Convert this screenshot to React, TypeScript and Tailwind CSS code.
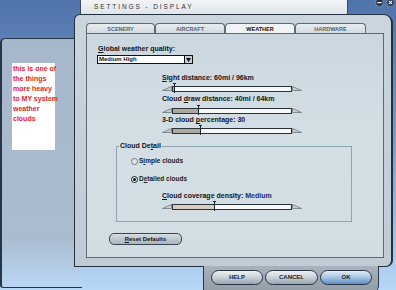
import React from "react";

const font = "font-['Liberation_Sans',Arial,sans-serif]";

function U({ children }: { children: React.ReactNode }) {
  return <span className="underline underline-offset-[1px]">{children}</span>;
}

function Slider({ value, fill = "#b3afa6" }: { value: number; fill?: string }) {
  return (
    <div className="flex h-[7px] w-[140px] items-center">
      <svg width="10" height="7" viewBox="0 0 10 7">
        <polygon points="0.5,5.5 9.5,1.5 9.5,5.5" fill="#c9d0d6" stroke="#6c767e" strokeWidth="0.8" />
      </svg>
      <div className="relative h-[6px] flex-1 border border-[#2b333a] bg-[#f6f7f7]">
        <div className="h-full" style={{ width: value, background: fill }} />
        <div className="absolute top-[-4px] h-[10px] w-[1px] bg-[#1d2329]" style={{ left: value }} />
        <div className="absolute top-[-4px] h-[1px] w-[3px] bg-[#1d2329]" style={{ left: value - 1 }} />
      </div>
      <svg width="10" height="7" viewBox="0 0 10 7">
        <polygon points="0.5,1.5 9.5,5.5 0.5,5.5" fill="#c9d0d6" stroke="#6c767e" strokeWidth="0.8" />
      </svg>
    </div>
  );
}

function Radio({ checked, children }: { checked?: boolean; children: React.ReactNode }) {
  return (
    <div className="flex h-[8px] items-center gap-[1px]">
      <div
        className={
          checked
            ? "flex h-[7px] w-[7px] items-center justify-center rounded-full border border-[#1c2228] bg-[#f2f4f4]"
            : "h-[7px] w-[7px] rounded-full border border-[#6e7a84] bg-[#dfe8ee]"
        }
      >
        {checked && <div className="h-[3px] w-[3px] rounded-full bg-[#111]" />}
      </div>
      <span className="text-[6.5px] font-bold leading-[8px] text-[#1a1e22]">{children}</span>
    </div>
  );
}

const tabs = ["SCENERY", "AIRCRAFT", "WEATHER", "HARDWARE"];
const tabW = ["w-[69px]", "w-[70px]", "w-[70px]", "w-[71px]"];

function PillButton({ label, primary, w }: { label: string; primary?: boolean; w: string }) {
  return (
    <button
      className={
        (primary
          ? "bg-linear-to-b from-[#e2ecf6] via-[#a8c4e2] to-[#5e8cc4] "
          : "bg-linear-to-b from-[#eef1f4] via-[#c9d1d8] to-[#98a4b0] ") +
        w +
        " flex h-[15px] items-center justify-center rounded-full border-[1.5px] border-[#283644] text-[6px] font-bold text-[#18222e]"
      }
    >
      {label}
    </button>
  );
}

export default function App() {
  return (
    <div className={`${font} relative h-[290px] w-[396px] overflow-hidden bg-linear-to-b from-[#4f74ab] via-[#7c9ed0] to-[#b6d7f6]`}>
      {/* left panel */}
      <div className="absolute left-0 top-[38px] flex h-[250px] w-[82px] flex-col rounded-tl-[5px] rounded-bl-[3px] border-l-2 border-t border-b border-[#28344a] bg-linear-to-b from-[#a7b7cb] via-[#aabccf] via-80% to-[#b8d6f4]">
        <div className="ml-[10px] mt-[24px] h-[87px] w-[43px] whitespace-nowrap bg-white pl-[1px] pt-[1px] text-[7px] font-bold leading-[10px] text-[#e5212b]">
          <p>this is one of</p>
          <p>the things</p>
          <p>more heavy</p>
          <p>to MY system</p>
          <p>weather</p>
          <p>clouds</p>
        </div>
      </div>

      {/* title tab */}
      <div className="absolute left-[80px] top-0 h-[16px] w-[268px] rounded-br-[4px] border-l border-r border-[#3a4858] bg-linear-to-b from-[#f2f4f6] to-[#dde3e8] pl-[13px] pt-[3px] text-[6.5px] leading-[8px] tracking-[1.9px] text-[#2e3438]">
        SETTINGS - DISPLAY
      </div>

      {/* window controls */}
      <div className="absolute right-[1px] top-[-2px] flex gap-[2px]">
        <svg width="9" height="9" viewBox="0 0 9 9">
          <circle cx="4.5" cy="4.5" r="4" fill="#1e2c48" stroke="#8ea2c0" strokeWidth="0.8" />
          <rect x="2.3" y="4" width="4.4" height="1.2" fill="#fff" />
        </svg>
        <svg width="9" height="9" viewBox="0 0 9 9">
          <circle cx="4.5" cy="4.5" r="4" fill="#1e2c48" stroke="#8ea2c0" strokeWidth="0.8" />
          <path d="M2.8 2.8 L6.2 6.2 M6.2 2.8 L2.8 6.2" stroke="#fff" strokeWidth="1.1" />
        </svg>
      </div>

      {/* dialog */}
      <div className="absolute left-[74px] top-[14px] flex h-[253px] w-[319px] flex-col rounded-tl-[6px] rounded-tr-[9px] rounded-br-[7px] border border-r-2 border-[#24303c] bg-linear-to-b from-[#cad5dd] to-[#bfcbd5]">
        <div className="ml-[11px] mt-[8px] flex h-[10px]">
          {tabs.map((t, i) => (
            <div
              key={t}
              className={
                tabW[i] +
                (t === "WEATHER"
                  ? " z-10 bg-[#f1f4f6] font-bold text-[#0e1012]"
                  : " bg-linear-to-b from-[#e8edf1] to-[#d2dbe2] font-bold text-[#58626c]") +
                " flex items-center justify-center rounded-t-[4px] border-l border-r border-t border-[#5c6a76] text-[5.5px] leading-[6px]"
              }
            >
              {t}
            </div>
          ))}
        </div>

        <div className="ml-[11px] flex h-[225px] w-[298px] flex-col items-start border border-[#5b6975] bg-linear-to-b from-[#cbd7df] via-[#d4dee5] to-[#d2dce3] text-[7px] font-bold leading-[8px] text-[#141618]">
          <p className="ml-[11px] mt-[11px]">
            <U>G</U>lobal weather quality:
          </p>
          <div className="ml-[10px] mt-[2px] flex h-[9px] w-[96px] items-center border border-[#111] bg-white">
            <span className="flex-1 pl-[1px] text-[6px] leading-[7px]">Medium High</span>
            <div className="flex h-full w-[8px] items-center justify-center border-l border-[#111] bg-[#c4ccd4]">
              <svg width="5" height="4" viewBox="0 0 5 4">
                <polygon points="0,0 5,0 2.5,4" fill="#111" />
              </svg>
            </div>
          </div>

          <div className="ml-[75px] flex flex-col">
            <p className="mt-[10px] whitespace-nowrap">
              <U>S</U>ight distance: 60mi / 96km
            </p>
            <div className="mt-[3px]">
              <Slider value={1} />
            </div>
            <p className="mt-[3px] whitespace-nowrap">
              Cloud <U>d</U>raw distance: 40mi / 64km
            </p>
            <div className="mt-[4px]">
              <Slider value={25} fill="#aca89f" />
            </div>
            <p className="mt-[2px] whitespace-nowrap">
              3-D cloud <U>p</U>ercentage: 30
            </p>
            <div className="mt-[3px]">
              <Slider value={27} fill="#aca89f" />
            </div>
          </div>

          <fieldset className="ml-[29px] mt-[8px] h-[80px] w-[236px] border border-[#8ea6b0] px-0">
            <legend className="ml-[2px] px-[1px] leading-[8px]">
              Cloud De<U>t</U>ail
            </legend>
            <div className="ml-[14px] mt-[7px]">
              <Radio>
                S<U>i</U>mple clouds
              </Radio>
            </div>
            <div className="ml-[14px] mt-[10px]">
              <Radio checked>
                D<U>e</U>tailed clouds
              </Radio>
            </div>
            <p className="ml-[45px] mt-[9px] whitespace-nowrap">
              <U>C</U>loud coverage density: <span className="text-[#1b2a74]">Medium</span>
            </p>
            <div className="ml-[45px] mt-[3px]">
              <Slider value={41} fill="#d8cdbf" />
            </div>
          </fieldset>

          <button className="ml-[22px] mt-[11px] flex h-[12px] w-[73px] items-center justify-center rounded-[5px] border border-[#3a4652] bg-linear-to-b from-[#d6dce2] to-[#aab4be] text-[6px] font-bold">
            <U>R</U>eset Defaults
          </button>
        </div>
      </div>

      {/* button tray */}
      <div className="absolute left-[203px] top-[266px] flex h-[26px] w-[176px] gap-[2px] rounded-br-[6px] border-l border-r border-[#2a3644] bg-linear-to-b from-[#aab2bc] to-[#939da8] pl-[7px] pt-[4px]">
        <PillButton label="HELP" w="w-[52px]" />
        <PillButton label="CANCEL" w="w-[53px]" />
        <PillButton label="OK" primary w="w-[52px]" />
      </div>
    </div>
  );
}
